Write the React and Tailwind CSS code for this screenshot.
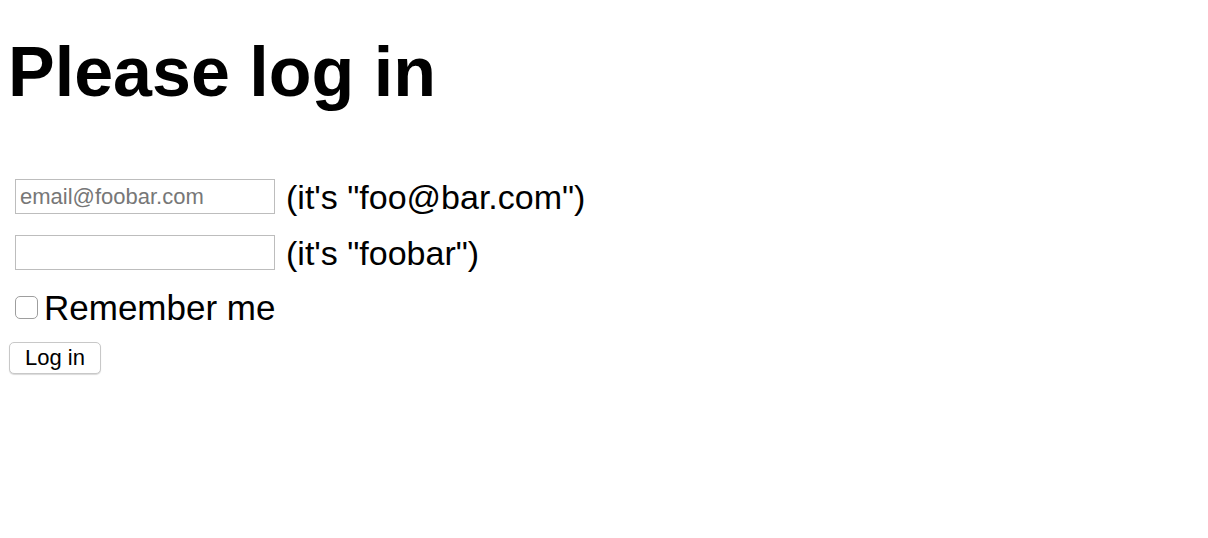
export default function App() {
  return (
    <div className="min-h-screen bg-white text-black font-['Liberation_Sans',Arial,sans-serif] px-2">
      <h1 className="text-[70px] font-bold leading-none pt-[37px]">Please log in</h1>
      <form className="mt-[72px] flex flex-col" onSubmit={(e) => e.preventDefault()}>
        <div className="flex items-center h-[35px] pl-[7px]">
          <input
            type="email"
            placeholder="email@foobar.com"
            className="w-[260px] h-[35px] border border-[#bdbdbd] px-1 text-[22px] placeholder:text-[#777] outline-none"
          />
          <span className="ml-[11px] text-[34px] leading-none">(it's "foo@bar.com")</span>
        </div>
        <div className="flex items-center h-[35px] pl-[7px] mt-[21px]">
          <input type="password" className="w-[260px] h-[35px] border border-[#bdbdbd] px-1 text-[22px] outline-none" />
          <span className="ml-[11px] text-[34px] leading-none">(it's "foobar")</span>
        </div>
        <label className="flex items-center mt-[20px] pl-[7px]">
          <input type="checkbox" className="appearance-none w-[23px] h-[23px] rounded-[5px] border border-[#9e9e9e] bg-white" />
          <span className="ml-[6px] text-[35px] leading-none">Remember me</span>
        </label>
        <div className="mt-[17px] pl-px">
          <button
            type="submit"
            className="px-[15px] h-[32px] text-[22px] leading-none border border-[#c8c8c8] rounded-[5px] bg-white shadow-[0_1px_1px_rgba(0,0,0,0.15)]"
          >
            Log in
          </button>
        </div>
      </form>
    </div>
  );
}
